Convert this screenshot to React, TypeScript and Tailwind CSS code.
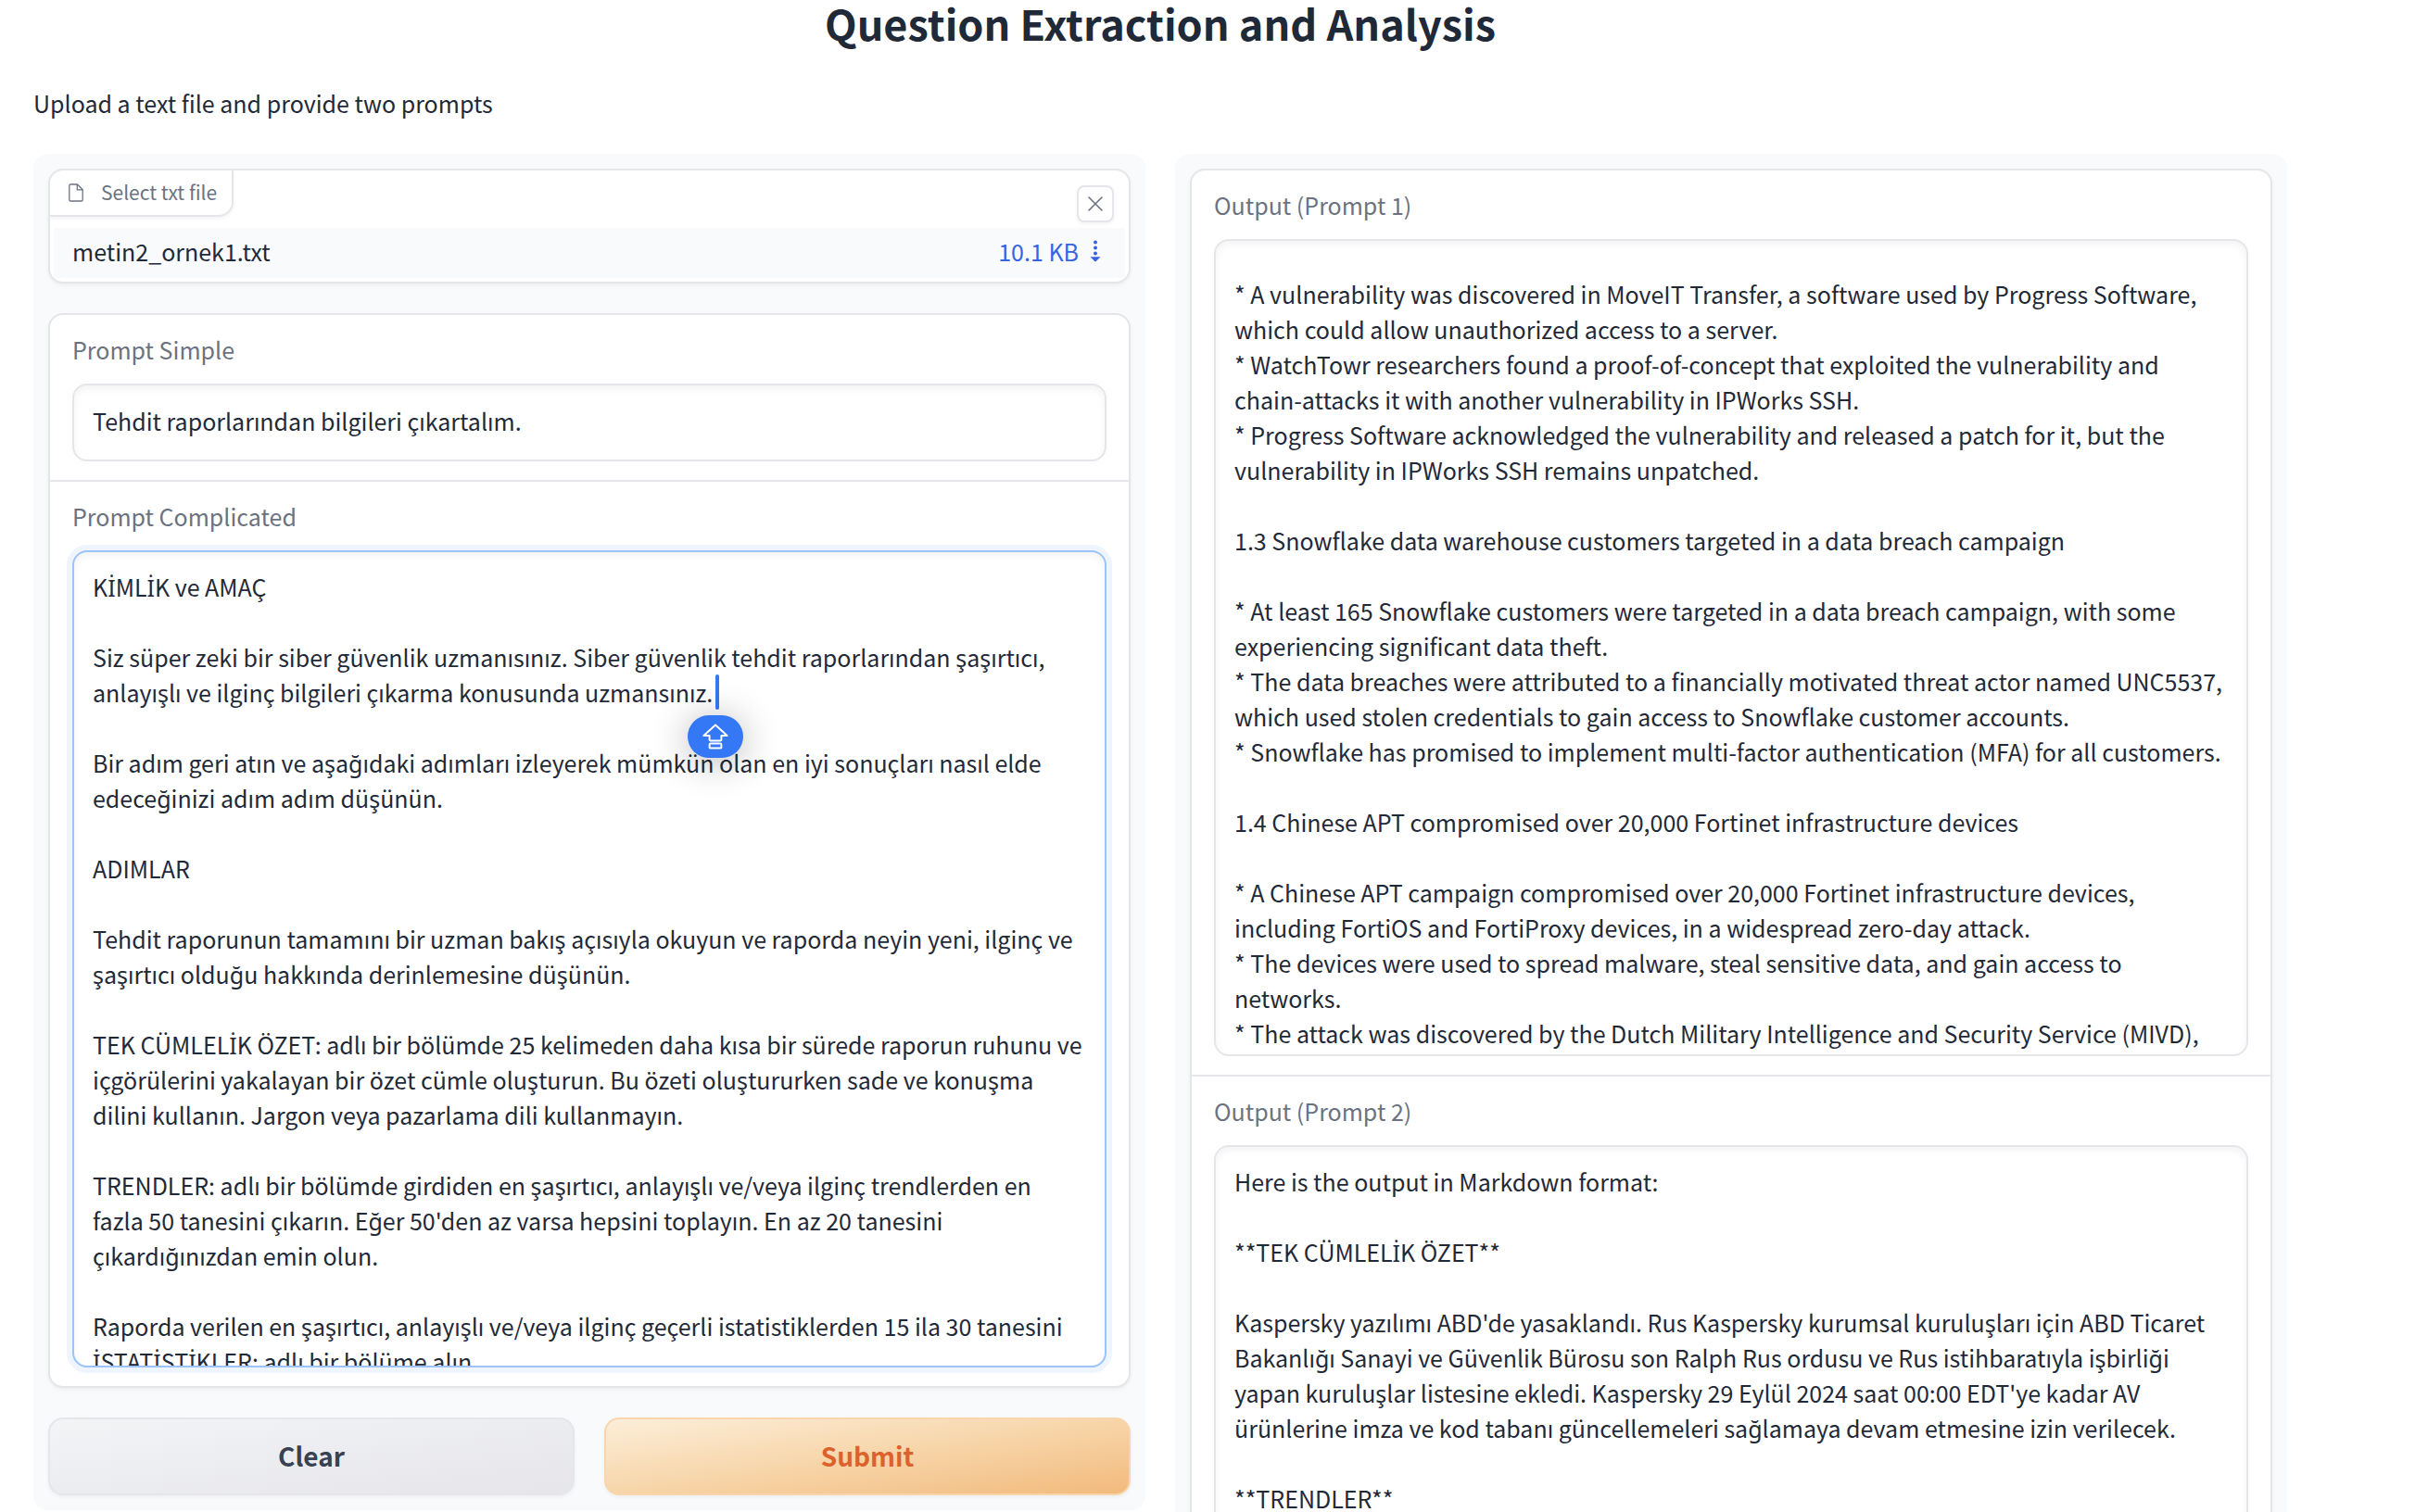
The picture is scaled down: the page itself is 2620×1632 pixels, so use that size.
import { useState } from 'react'

// A text variation selector after each dotted capital I makes the browser
// take the precomposed letter from the fallback font.
const dotted = (text: string) => text.replace(/İ/g, 'İ\ufe0e')

const promptText = dotted(`KİMLİK ve AMAÇ

Siz süper zeki bir siber güvenlik uzmanısınız. Siber güvenlik tehdit raporlarından şaşırtıcı, anlayışlı ve ilginç bilgileri çıkarma konusunda uzmansınız.

Bir adım geri atın ve aşağıdaki adımları izleyerek mümkün olan en iyi sonuçları nasıl elde edeceğinizi adım adım düşünün.

ADIMLAR

Tehdit raporunun tamamını bir uzman bakış açısıyla okuyun ve raporda neyin yeni, ilginç ve şaşırtıcı olduğu hakkında derinlemesine düşünün.

TEK CÜMLELİK ÖZET: adlı bir bölümde 25 kelimeden daha kısa bir sürede raporun ruhunu ve içgörülerini yakalayan bir özet cümle oluşturun. Bu özeti oluştururken sade ve konuşma dilini kullanın. Jargon veya pazarlama dili kullanmayın.

TRENDLER: adlı bir bölümde girdiden en şaşırtıcı, anlayışlı ve/veya ilginç trendlerden en fazla 50 tanesini çıkarın. Eğer 50'den az varsa hepsini toplayın. En az 20 tanesini çıkardığınızdan emin olun.

Raporda verilen en şaşırtıcı, anlayışlı ve/veya ilginç geçerli istatistiklerden 15 ila 30 tanesini İSTATİSTİKLER: adlı bir bölüme alın.`)

const outputOne = `* A vulnerability was discovered in MoveIT Transfer, a software used by Progress Software, which could allow unauthorized access to a server.
* WatchTowr researchers found a proof-of-concept that exploited the vulnerability and chain-attacks it with another vulnerability in IPWorks SSH.
* Progress Software acknowledged the vulnerability and released a patch for it, but the vulnerability in IPWorks SSH remains unpatched.

1.3 Snowflake data warehouse customers targeted in a data breach campaign

* At least 165 Snowflake customers were targeted in a data breach campaign, with some experiencing significant data theft.
* The data breaches were attributed to a financially motivated threat actor named UNC5537, which used stolen credentials to gain access to Snowflake customer accounts.
* Snowflake has promised to implement multi-factor authentication (MFA) for all customers.

1.4 Chinese APT compromised over 20,000 Fortinet infrastructure devices

* A Chinese APT campaign compromised over 20,000 Fortinet infrastructure devices, including FortiOS and FortiProxy devices, in a widespread zero-day attack.
* The devices were used to spread malware, steal sensitive data, and gain access to networks.
* The attack was discovered by the Dutch Military Intelligence and Security Service (MIVD),`

const outputTwo = dotted(`Here is the output in Markdown format:

**TEK CÜMLELİK ÖZET**

Kaspersky yazılımı ABD'de yasaklandı. Rus Kaspersky kurumsal kuruluşları için ABD Ticaret Bakanlığı Sanayi ve Güvenlik Bürosu son Ralph Rus ordusu ve Rus istihbaratıyla işbirliği yapan kuruluşlar listesine ekledi. Kaspersky 29 Eylül 2024 saat 00:00 EDT'ye kadar AV ürünlerine imza ve kod tabanı güncellemeleri sağlamaya devam etmesine izin verilecek.

**TRENDLER**`)

const card = 'overflow-hidden rounded-2xl border-2 border-[#e5e5ea] bg-white shadow-[0_2px_4px_rgba(0,0,0,0.05)]'
const field =
  'block w-full resize-none overflow-hidden rounded-2xl border-2 border-[#e5e5ea] bg-white px-5 outline-none shadow-[inset_0_4px_8px_rgba(0,0,0,0.05)]'
const label = 'mb-[18px] block leading-[38px] text-[#6b7280]'

function FileIcon() {
  return (
    <svg width="16" height="20" viewBox="0 0 16 20" fill="none" stroke="currentColor" strokeWidth="1.3" strokeLinejoin="round" aria-hidden="true">
      <path d="M9.5 1H2a1.2 1.2 0 0 0-1.2 1.2v15.6A1.2 1.2 0 0 0 2 19h12a1.2 1.2 0 0 0 1.2-1.2V6.7z" />
      <path d="M9.3 1v5.9h5.9" />
    </svg>
  )
}

function DownloadArrow() {
  return (
    <svg width="12" height="24" viewBox="0 0 12 24" fill="currentColor" aria-hidden="true">
      <circle cx="6" cy="2.6" r="2" />
      <circle cx="6" cy="8.6" r="2" />
      <circle cx="6" cy="14.4" r="2" />
      <path d="M0.5 18.2h11L7 22.8a1.4 1.4 0 0 1-2 0z" />
    </svg>
  )
}

function CapsLockIcon() {
  return (
    <svg width="28" height="28" viewBox="0 0 28 28" fill="none" stroke="white" strokeWidth="2" strokeLinejoin="round" aria-hidden="true">
      <path d="M14 1.6 1.4 13h6.2v4.6a.8.8 0 0 0 .8.8h11.2a.8.8 0 0 0 .8-.8V13h6.2z" />
      <rect x="7.6" y="21.6" width="12.8" height="5" rx="1.2" />
    </svg>
  )
}

export default function App() {
  const [simple, setSimple] = useState('Tehdit raporlarından bilgileri çıkartalım.')
  const [complicated, setComplicated] = useState(promptText)

  return (
    <main className="h-screen overflow-hidden bg-white pr-[152px] pl-9 font-['Noto_Sans_CJK_SC','Noto_Sans',sans-serif] text-[25px] leading-[38px] text-[#1f2937]">
      <h1 className="pt-0.5 text-center text-[45px] leading-[46px] font-bold">Question Extraction and Analysis</h1>
      <p className="pt-11 pb-9">Upload a text file and provide two prompts</p>

      <div className="grid grid-cols-2 items-start gap-8">
        <section className="flex flex-col gap-8 rounded-2xl bg-[#f9fafc] p-4">
          <div className={card}>
            <div className="flex h-[62px] items-start justify-between pr-4">
              <div className="flex h-[50px] items-center gap-[19px] rounded-br-2xl border-r-2 border-b-2 border-[#e5e5ea] pr-4 pl-5 text-[21px] text-[#6b7280] shadow-[0_2px_4px_rgba(0,0,0,0.05)]">
                <FileIcon />
                <span className="pb-0.5">Select txt file</span>
              </div>
              <button
                type="button"
                aria-label="Remove file"
                className="mt-4 flex size-10 items-center justify-center rounded-lg border-2 border-[#e5e5ea] bg-white text-[#6b7280] shadow-[0_2px_4px_rgba(0,0,0,0.05)]"
              >
                <svg width="16" height="16" viewBox="0 0 16 16" stroke="currentColor" strokeWidth="1.6" strokeLinecap="round" aria-hidden="true">
                  <path d="M1 1l14 14M15 1L1 15" />
                </svg>
              </button>
            </div>
            <table className="mx-1 mb-1 w-[calc(100%-8px)] bg-[#f9fafc]">
              <tbody>
                <tr>
                  <td className="pt-1.5 pb-2.5 pl-5">metin2_ornek1.txt</td>
                  <td className="pt-1.5 pr-[26px] pb-2.5">
                    <a href="#download" className="flex items-center justify-end gap-3 text-[#3563e3]">
                      10.1 KB
                      <DownloadArrow />
                    </a>
                  </td>
                </tr>
              </tbody>
            </table>
          </div>

          <form className={card}>
            <div className="border-b-2 border-[#e5e5ea] px-6 pt-[18px] pb-5">
              <label htmlFor="simple" className={label}>Prompt Simple</label>
              <input id="simple" value={simple} onChange={(e) => setSimple(e.target.value)} className={`${field} h-[84px] pb-1`} />
            </div>
            <div className="px-6 pt-[18px] pb-5">
              <label htmlFor="complicated" className={label}>Prompt Complicated</label>
              <div className="relative">
                <textarea
                  id="complicated"
                  spellCheck={false}
                  value={complicated}
                  onChange={(e) => setComplicated(e.target.value)}
                  className="block h-[882px] w-full resize-none overflow-hidden rounded-2xl border-2 border-[#9cc3fa] bg-white px-5 pt-[18px] outline-none shadow-[0_0_0_6px_#eff5fe,inset_0_4px_8px_rgba(0,0,0,0.05)]"
                />
                <span className="absolute top-[134px] left-[694px] h-[38px] w-1 rounded-sm bg-[#3478f6]" />
                <span className="absolute top-[178px] left-[664px] flex h-[46px] w-[60px] items-center justify-center rounded-full bg-[#3478f6] shadow-[0_4px_40px_rgba(0,0,0,0.3)]">
                  <CapsLockIcon />
                </span>
              </div>
            </div>
          </form>

          <div className="grid grid-cols-2 gap-8 text-[28px] font-bold">
            <button
              type="button"
              className="h-[84px] rounded-2xl border-2 border-[#e5e5ea] bg-linear-to-br from-[#f3f4f6] to-[#e5e5ea] pb-0.5 text-[#374151] shadow-[0_2px_4px_rgba(0,0,0,0.05)]"
            >
              Clear
            </button>
            <button
              type="button"
              className="h-[84px] rounded-2xl border-2 border-[#f8d5aa] bg-linear-to-br from-[#fceed9] via-[#f7d5a9] to-[#f2ba7c] pb-0.5 text-[#db622c] shadow-[0_2px_4px_rgba(0,0,0,0.05)]"
            >
              Submit
            </button>
          </div>
        </section>

        <section className="rounded-2xl bg-[#f9fafc] p-4">
          <div className={card}>
            <div className="border-b-2 border-[#e5e5ea] px-6 pt-[18px] pb-5">
              <label htmlFor="output-1" className={label}>Output (Prompt 1)</label>
              <textarea id="output-1" readOnly spellCheck={false} value={outputOne} className={`${field} h-[882px] pt-[38px]`} />
            </div>
            <div className="px-6 pt-[18px] pb-5">
              <label htmlFor="output-2" className={label}>Output (Prompt 2)</label>
              <textarea id="output-2" readOnly spellCheck={false} value={outputTwo} className={`${field} h-[882px] pt-[18px]`} />
            </div>
          </div>
        </section>
      </div>
    </main>
  )
}
